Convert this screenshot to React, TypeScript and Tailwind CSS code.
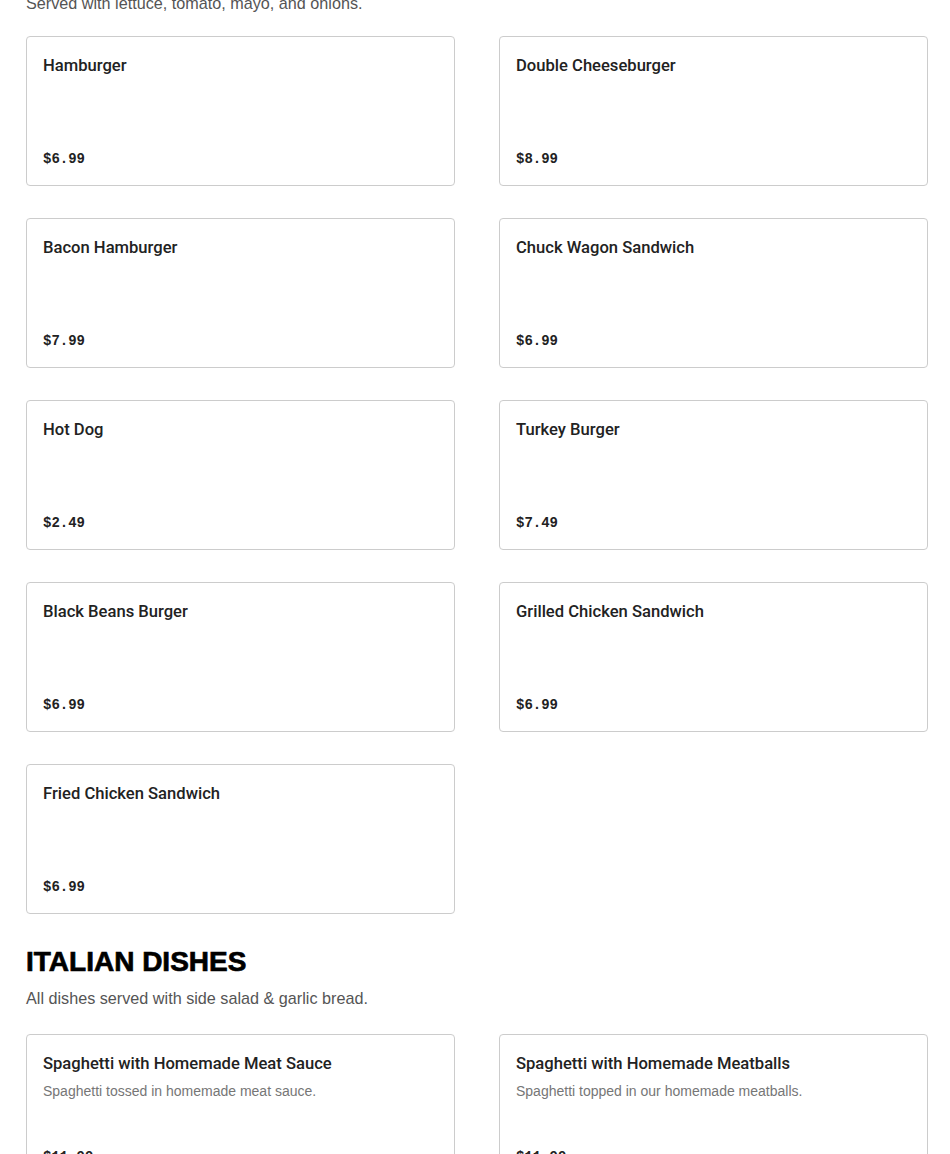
import React from "react";

type Item = { name: string; price: string; desc?: string };

const burgers: Item[] = [
  { name: "Hamburger", price: "$6.99" },
  { name: "Double Cheeseburger", price: "$8.99" },
  { name: "Bacon Hamburger", price: "$7.99" },
  { name: "Chuck Wagon Sandwich", price: "$6.99" },
  { name: "Hot Dog", price: "$2.49" },
  { name: "Turkey Burger", price: "$7.49" },
  { name: "Black Beans Burger", price: "$6.99" },
  { name: "Grilled Chicken Sandwich", price: "$6.99" },
  { name: "Fried Chicken Sandwich", price: "$6.99" },
];

const italian: Item[] = [
  {
    name: "Spaghetti with Homemade Meat Sauce",
    desc: "Spaghetti tossed in homemade meat sauce.",
    price: "$11.99",
  },
  {
    name: "Spaghetti with Homemade Meatballs",
    desc: "Spaghetti topped in our homemade meatballs.",
    price: "$11.99",
  },
];

function Card({ item }: { item: Item }) {
  return (
    <div className="h-[150px] w-[429px] rounded-[4px] border border-[#cccccc] bg-white px-4 py-4 flex flex-col justify-between">
      <div className="pt-[1px]">
        <div className="text-[16.6px] leading-[24px] font-medium text-[#222222] font-['Roboto','Liberation_Sans',Arial,sans-serif]">
          {item.name}
        </div>
        {item.desc && (
          <div className="mt-[5px] text-[14px] leading-[20px] text-[#767676] font-['Liberation_Sans',Arial,sans-serif]">
            {item.desc}
          </div>
        )}
      </div>
      <div className="text-[14px] leading-[20px] font-bold text-[#222222] font-['Liberation_Mono','Courier_New',monospace]">
        {item.price}
      </div>
    </div>
  );
}

export default function App() {
  return (
    <div className="min-h-[1154px] bg-white pl-[26px] pr-[22px] overflow-hidden font-['Liberation_Sans',Arial,sans-serif]">
      <p className="-mt-[9px] text-[16.2px] leading-[24px] text-[#555555]">
        Served with lettuce, tomato, mayo, and onions.
      </p>
      <div className="mt-[21px] grid grid-cols-[429px_429px] gap-x-[44px] gap-y-[32px]">
        {burgers.map((b) => (
          <Card key={b.name} item={b} />
        ))}
      </div>
      <h2 className="mt-[30px] text-[28px] leading-[36px] font-black text-black [-webkit-text-stroke:0.7px_black]">
        ITALIAN DISHES
      </h2>
      <p className="mt-[6px] text-[16.2px] leading-[24px] text-[#555555]">
        All dishes served with side salad &amp; garlic bread.
      </p>
      <div className="mt-[24px] grid grid-cols-[429px_429px] gap-x-[44px] gap-y-[32px]">
        {italian.map((b) => (
          <Card key={b.name} item={b} />
        ))}
      </div>
    </div>
  );
}
